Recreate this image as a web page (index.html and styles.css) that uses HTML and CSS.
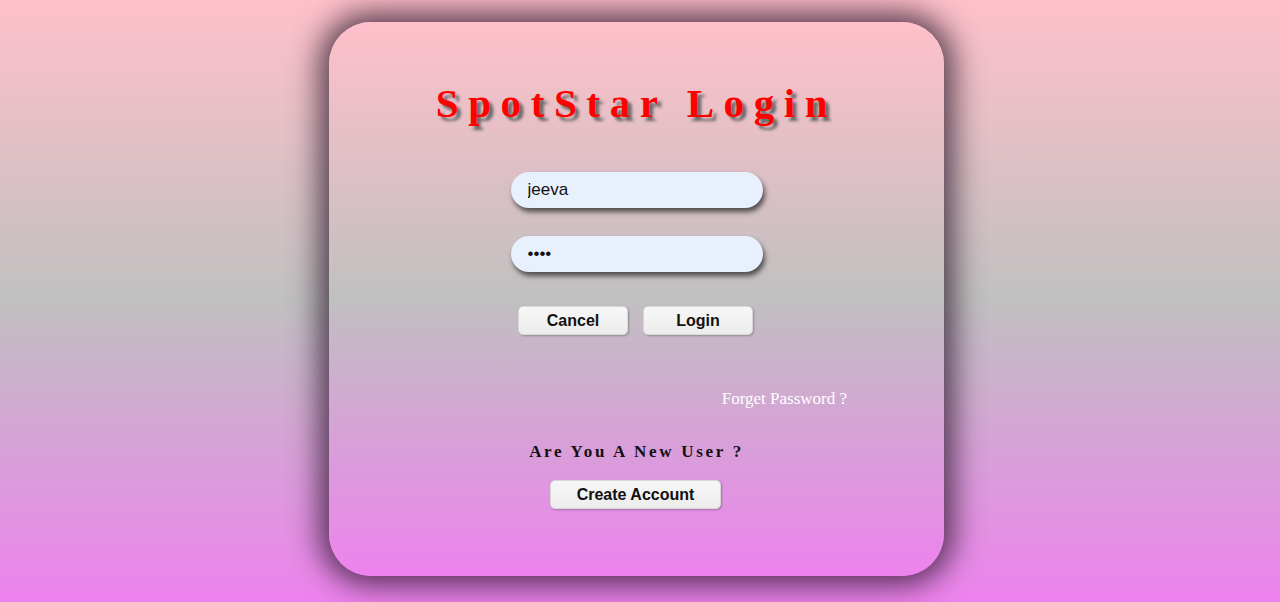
FILE: index.html
```html
<!DOCTYPE html>
<html lang="en">
<head>
<meta charset="utf-8">
<title>SpotStar Login</title>
<link rel="stylesheet" href="styles.css">
</head>
<body>
<div class="page">
  <div class="card">
    <h1 class="title">SpotStar Login</h1>
    <form class="form">
      <input class="field" type="text" value="jeeva">
      <input class="field" type="password" value="abcd">
      <div class="actions">
        <button type="button" class="btn">Cancel</button>
        <button type="button" class="btn">Login</button>
      </div>
    </form>
    <div class="forget-row"><a class="forget" href="#">Forget Password ?</a></div>
    <p class="new-user">Are You A New User ?</p>
    <button type="button" class="btn btn-create">Create Account</button>
  </div>
</div>
</body>
</html>
```
FILE: styles.css
```css
html, body {
  margin: 0;
  height: 100%;
}
body {
  background: linear-gradient(to bottom, #ffc0cb 0%, #c0c0c0 50%, #ee82ee 100%);
  font-family: "Liberation Serif", "Times New Roman", serif;
}
.page {
  height: 602px;
  display: flex;
  justify-content: center;
  padding-top: 22px;
  padding-right: 7px;
  box-sizing: border-box;
}
.card {
  width: 615px;
  height: 554px;
  border-radius: 42px;
  background: linear-gradient(to bottom, #ffc0cb 0%, #c0c0c0 50%, #ee82ee 100%);
  box-shadow: 0 0 30px 9px rgba(35, 15, 35, 0.75);
  display: flex;
  flex-direction: column;
  align-items: center;
  box-sizing: border-box;
  padding-top: 56px;
}
.title {
  margin: 0;
  font-family: "Liberation Serif", "Times New Roman", serif;
  font-weight: bold;
  font-size: 41px;
  line-height: 50px;
  letter-spacing: 9.6px;
  color: #ff0000;
  text-shadow: 4px 4px 3px #6a6a6a;
}
.form {
  margin-top: 44px;
  display: flex;
  flex-direction: column;
  align-items: center;
}
.field {
  width: 252px;
  height: 36px;
  box-sizing: border-box;
  border: none;
  border-radius: 18px;
  background: #e8f0fe;
  padding: 0 17px;
  font-family: "Liberation Sans", Arial, sans-serif;
  font-size: 17px;
  color: #111;
  box-shadow: 2px 4px 5px rgba(40, 40, 40, 0.75);
  outline: none;
  margin-bottom: 28px;
}
.actions {
  display: flex;
  gap: 15px;
  margin-top: 6px;
  margin-right: 2px;
}
.btn {
  width: 110px;
  height: 29px;
  border: 1px solid #d8d8d8;
  border-radius: 5px;
  background: linear-gradient(#f7f7f7, #ececec);
  font-family: "Liberation Sans", Arial, sans-serif;
  font-weight: bold;
  font-size: 16px;
  color: #111;
  box-shadow: 1px 1px 2px rgba(0, 0, 0, 0.25);
  padding: 0;
}
.forget-row {
  width: 100%;
  display: flex;
  justify-content: flex-end;
  box-sizing: border-box;
  padding-right: 97px;
  margin-top: 53px;
}
.forget {
  color: #ffffff;
  text-decoration: none;
  font-size: 17px;
  line-height: 22px;
}
.new-user {
  margin: 31px 0 0;
  font-weight: bold;
  font-size: 17px;
  line-height: 22px;
  letter-spacing: 2.7px;
  color: #111;
}
.btn-create {
  width: 171px;
  height: 29px;
  margin-top: 17px;
  margin-right: 2px;
}
```
